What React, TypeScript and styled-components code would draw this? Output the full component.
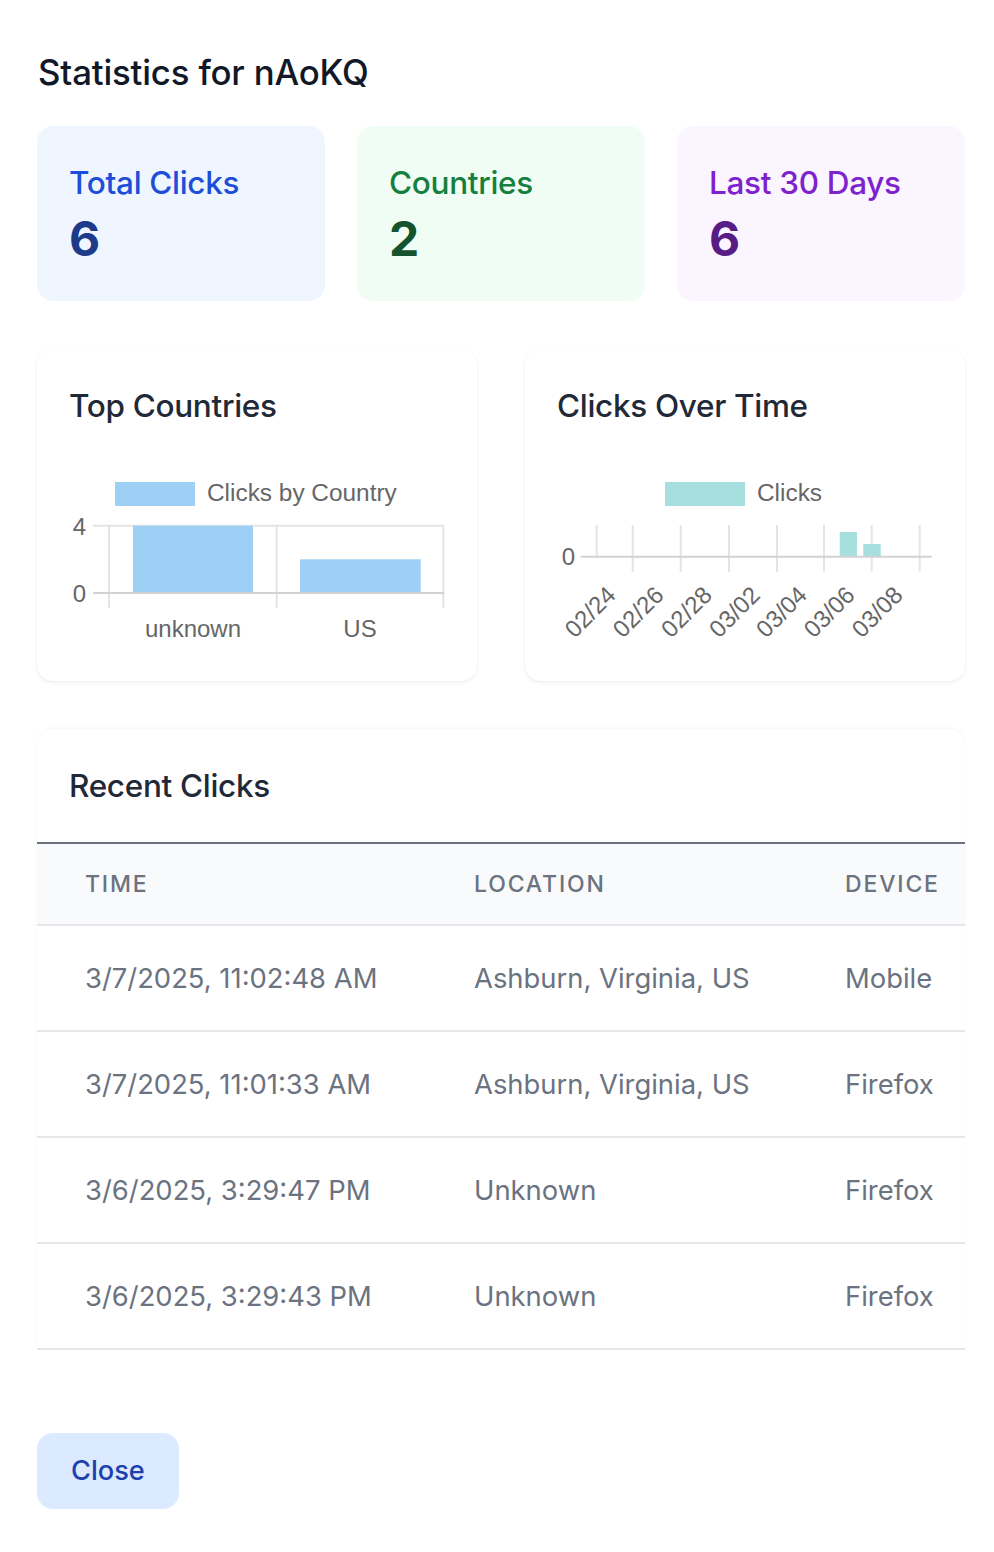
import React from "react";
import styled, { createGlobalStyle } from "styled-components";

const GlobalStyle = createGlobalStyle`
  html, body { margin: 0; padding: 0; background: #ffffff; }
  body { font-family: Inter, "Noto Sans", "Liberation Sans", sans-serif; -webkit-font-smoothing: antialiased; }
  * { box-sizing: border-box; }
`;

const Modal = styled.div`
  width: 994px;
  min-height: 1552px;
  padding: 45px 29px 42px 37px;
  background: #ffffff;
`;

const Title = styled.h2`
  margin: 0 0 27px 1px;
  font-size: 34.8px;
  line-height: 54px;
  font-weight: 500;
  color: #111827;
  letter-spacing: -0.005em;
`;

const StatGrid = styled.div`
  display: grid;
  grid-template-columns: repeat(3, 1fr);
  gap: 32px;
  margin-bottom: 48px;
`;

const tones = {
  blue: { bg: "#eff6ff", label: "#1d4ed8", value: "#1e3a8a" },
  green: { bg: "#f0fdf4", label: "#15803d", value: "#14532d" },
  purple: { bg: "#faf5ff", label: "#7e22ce", value: "#581c87" },
};
type Tone = keyof typeof tones;

const StatCard = styled.div<{ $tone: Tone }>`
  background: ${(p) => tones[p.$tone].bg};
  border-radius: 16px;
  padding: 32px;
  height: 175px;
`;

const StatLabel = styled.div<{ $tone: Tone }>`
  font-size: 31.5px;
  line-height: 49px;
  font-weight: 500;
  color: ${(p) => tones[p.$tone].label};
  letter-spacing: -0.01em;
`;

const StatValue = styled.div<{ $tone: Tone }>`
  font-size: 48px;
  line-height: 63px;
  font-weight: 700;
  color: ${(p) => tones[p.$tone].value};
`;

const ChartGrid = styled.div`
  display: grid;
  grid-template-columns: 1fr 1fr;
  gap: 48px;
  margin-bottom: 48px;
`;

const Card = styled.div`
  background: #ffffff;
  border-radius: 16px;
  box-shadow: 0 2px 4px rgba(0, 0, 0, 0.06), 0 0 2px rgba(0, 0, 0, 0.04);
`;

const ChartCard = styled(Card)`
  padding: 33px 32px 31px 32px;
  height: 332px;
`;

const CardTitle = styled.h3<{ $pad?: boolean }>`
  margin: 0 0 32px 0;
  padding: ${(p) => (p.$pad ? "33px 32px 0 32px" : "0")};
  font-size: 31.5px;
  line-height: 48px;
  font-weight: 500;
  color: #1f2937;
  letter-spacing: -0.01em;
`;

const ChartSvg = styled.svg`
  display: block;
  width: 376px;
  height: 187px;
  overflow: visible;
  font-family: "Liberation Sans", Arial, sans-serif;
`;

const TableCard = styled(Card)`
  overflow: hidden;
  border-radius: 16px 16px 0 0;
  box-shadow: 0 -1px 3px rgba(0, 0, 0, 0.04);
`;

const TableWrap = styled.div`
  overflow: hidden;
  width: 100%;
`;

const Table = styled.table`
  width: 948px;
  table-layout: fixed;
  border-collapse: collapse;
  border-top: 2px solid #6b7280;
`;

const HeadCell = styled.th`
  background: #f9fafb;
  padding: 24px 48px;
  text-align: left;
  font-size: 23px;
  line-height: 32px;
  font-weight: 500;
  color: #6b7280;
  text-transform: uppercase;
  letter-spacing: 0.08em;
  border-bottom: 2px solid #e5e7eb;
  white-space: nowrap;
`;

const Cell = styled.td`
  padding: 32px 48px;
  font-size: 27.4px;
  line-height: 40px;
  color: #6b7280;
  border-bottom: 2px solid #e5e7eb;
  white-space: nowrap;
`;

const Footer = styled.div`
  margin-top: 83px;
  display: flex;
`;

const CloseButton = styled.button`
  font-family: Inter, "Noto Sans", sans-serif;
  font-size: 27.2px;
  line-height: 40px;
  font-weight: 500;
  color: #1e40af;
  background: #dbeafe;
  border: 2px solid transparent;
  border-radius: 16px;
  padding: 16px 32px;
  cursor: pointer;
`;

const GRID = "#e4e4e4";
const AXIS = "#d2d2d2";
const TXT = "#666666";

function TopCountriesChart() {
  const vlines = [40, 207.7, 374.3];
  return (
    <ChartSvg viewBox="0 0 376 187">
      <rect x={46} y={20} width={80} height={24} fill="#9ed0f5" />
      <text x={138} y={39} fontSize={24.4} fill={TXT}>Clicks by Country</text>
      <line x1={24} y1={63.7} x2={375} y2={63.7} stroke={GRID} strokeWidth={2} />
      {vlines.map((x) => (
        <line key={x} x1={x} y1={63.7} x2={x} y2={146} stroke={GRID} strokeWidth={2} />
      ))}
      <rect x={64} y={63.7} width={120} height={67.3} fill="#9ed0f5" />
      <rect x={231} y={97.3} width={120.7} height={33.7} fill="#9ed0f5" />
      <line x1={24} y1={131} x2={375} y2={131} stroke={AXIS} strokeWidth={2} />
      <text x={17} y={72.6} fontSize={24} fill={TXT} textAnchor="end">4</text>
      <text x={17} y={139.6} fontSize={24} fill={TXT} textAnchor="end">0</text>
      <text x={124} y={174.7} fontSize={24} fill={TXT} textAnchor="middle">unknown</text>
      <text x={291} y={174.7} fontSize={24} fill={TXT} textAnchor="middle">US</text>
    </ChartSvg>
  );
}

function ClicksOverTimeChart() {
  const ticks = [
    { x: 75.7, label: "02/24" },
    { x: 123.7, label: "02/26" },
    { x: 172, label: "02/28" },
    { x: 220, label: "03/02" },
    { x: 267, label: "03/04" },
    { x: 314.7, label: "03/06" },
    { x: 362.7, label: "03/08" },
  ];
  return (
    <ChartSvg viewBox="0 0 376 187">
      <rect x={108} y={20} width={80} height={24} fill="#a7dfdf" />
      <text x={200} y={39} fontSize={24.4} fill={TXT}>Clicks</text>
      <line x1={39.7} y1={63} x2={39.7} y2={94.7} stroke={GRID} strokeWidth={2} />
      {ticks.map((t) => (
        <line key={t.x} x1={t.x} y1={63} x2={t.x} y2={109.7} stroke={GRID} strokeWidth={2} />
      ))}
      <rect x={282.7} y={70} width={17.3} height={24.7} fill="#a7dfdf" />
      <rect x={306.3} y={82} width={17.4} height={12.7} fill="#a7dfdf" />
      <line x1={23.7} y1={94.7} x2={374.7} y2={94.7} stroke={AXIS} strokeWidth={2} />
      <text x={18} y={103.3} fontSize={24} fill={TXT} textAnchor="end">0</text>
      {ticks.map((t) => {
        const ax = t.x - 20;
        const ay = 130;
        return (
          <text
            key={t.label}
            x={ax}
            y={ay}
            fontSize={24}
            fill={TXT}
            textAnchor="end"
            dominantBaseline="middle"
            transform={`rotate(-45 ${ax} ${ay})`}
          >
            {t.label}
          </text>
        );
      })}
    </ChartSvg>
  );
}

const clicks = [
  { time: "3/7/2025, 11:02:48 AM", location: "Ashburn, Virginia, US", device: "Mobile" },
  { time: "3/7/2025, 11:01:33 AM", location: "Ashburn, Virginia, US", device: "Firefox" },
  { time: "3/6/2025, 3:29:47 PM", location: "Unknown", device: "Firefox" },
  { time: "3/6/2025, 3:29:43 PM", location: "Unknown", device: "Firefox" },
];

export default function App() {
  return (
    <>
      <GlobalStyle />
      <Modal>
        <Title>Statistics for nAoKQ</Title>
        <StatGrid>
          <StatCard $tone="blue">
            <StatLabel $tone="blue">Total Clicks</StatLabel>
            <StatValue $tone="blue">6</StatValue>
          </StatCard>
          <StatCard $tone="green">
            <StatLabel $tone="green">Countries</StatLabel>
            <StatValue $tone="green">2</StatValue>
          </StatCard>
          <StatCard $tone="purple">
            <StatLabel $tone="purple">Last 30 Days</StatLabel>
            <StatValue $tone="purple">6</StatValue>
          </StatCard>
        </StatGrid>

        <ChartGrid>
          <ChartCard>
            <CardTitle>Top Countries</CardTitle>
            <TopCountriesChart />
          </ChartCard>
          <ChartCard>
            <CardTitle>Clicks Over Time</CardTitle>
            <ClicksOverTimeChart />
          </ChartCard>
        </ChartGrid>

        <TableCard>
          <CardTitle $pad>Recent Clicks</CardTitle>
          <TableWrap>
            <Table>
              <colgroup>
                <col style={{ width: 389 }} />
                <col style={{ width: 371 }} />
                <col style={{ width: 188 }} />
              </colgroup>
              <thead>
                <tr>
                  <HeadCell>Time</HeadCell>
                  <HeadCell>Location</HeadCell>
                  <HeadCell>Device</HeadCell>
                </tr>
              </thead>
              <tbody>
                {clicks.map((c) => (
                  <tr key={c.time}>
                    <Cell>{c.time}</Cell>
                    <Cell>{c.location}</Cell>
                    <Cell>{c.device}</Cell>
                  </tr>
                ))}
              </tbody>
            </Table>
          </TableWrap>
        </TableCard>

        <Footer>
          <CloseButton>Close</CloseButton>
        </Footer>
      </Modal>
    </>
  );
}
